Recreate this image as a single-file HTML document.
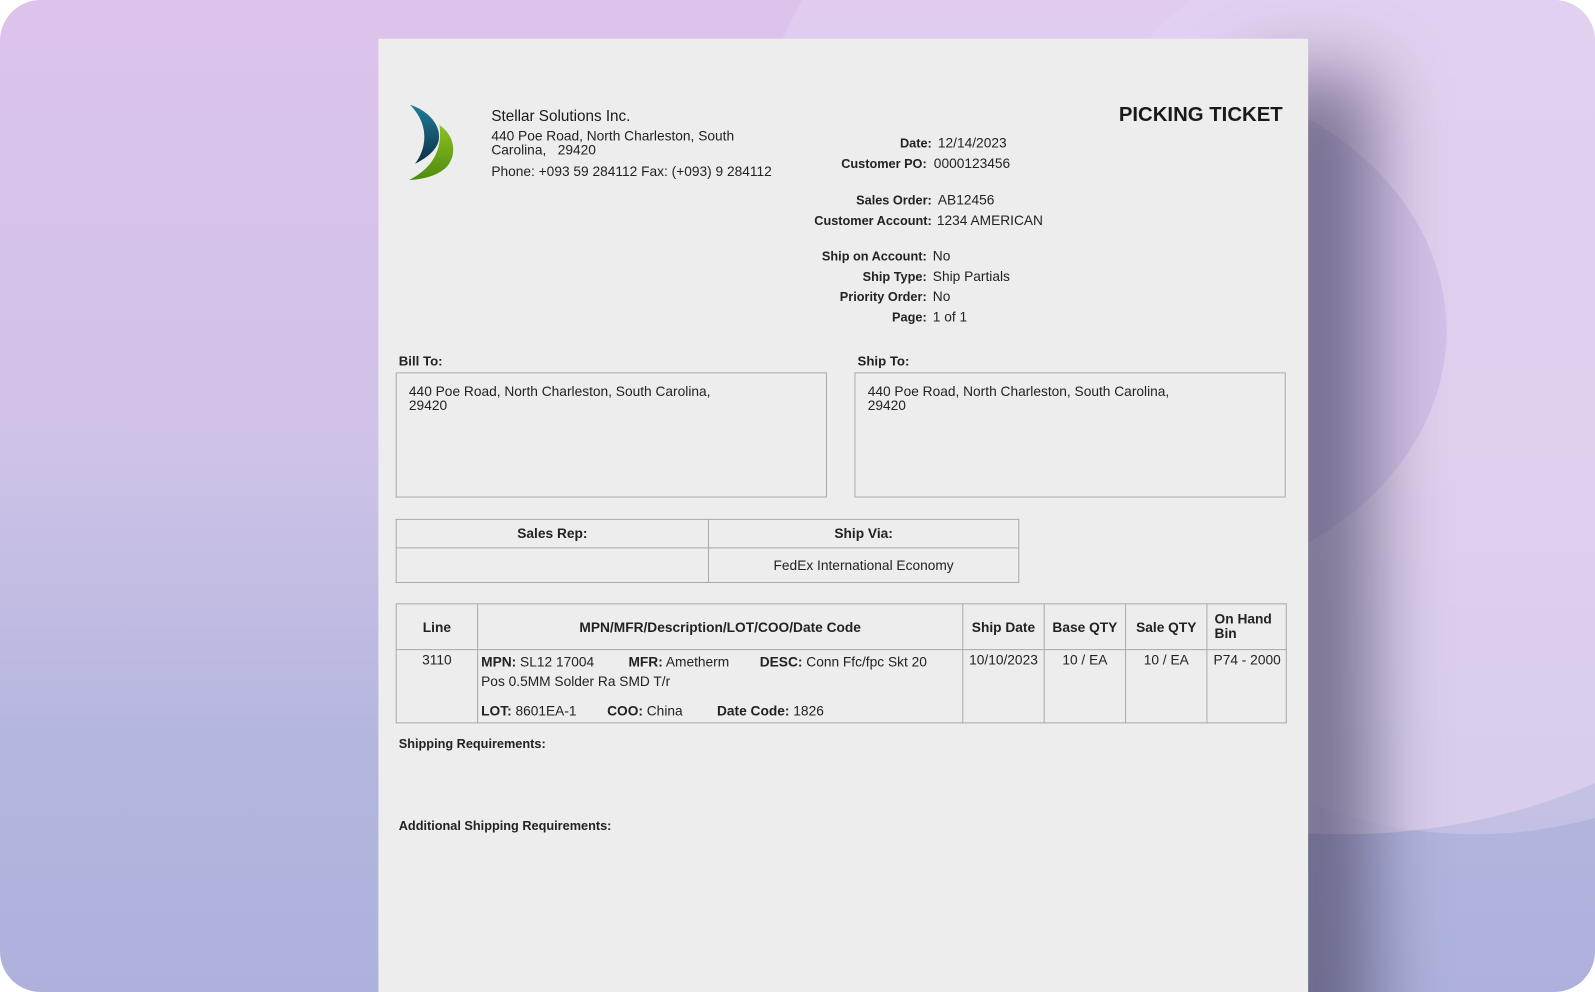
<!DOCTYPE html>
<html><head><meta charset="utf-8"><style>
html,body{margin:0;padding:0;width:1595px;height:992px;overflow:hidden;background:#fff;}
#w{position:absolute;left:0;top:0;width:1568px;height:975px;overflow:hidden;transform:scale(1.01722,1.01744);transform-origin:0 0;font-family:"Liberation Sans",sans-serif;color:#222;}
.bg{position:absolute;inset:0;border-radius:40px;overflow:hidden;background:linear-gradient(180deg,#dcc3ec 0%,#cfc2e8 45%,#b4b6de 75%,#adb1dc 100%);}
.doc{position:absolute;left:372px;top:38px;width:914px;height:937px;background:#ededed;}
.a{position:absolute;white-space:nowrap;}
.lb{font-weight:bold;font-size:12.5px;text-align:right;width:200px;}
.v{font-size:13.5px;}
.box{position:absolute;border:1px solid #aaa;}
table{border-collapse:collapse;position:absolute;font-size:13.5px;}
td,th{border:1px solid #aaa;padding:0;}
th{font-size:13.5px;}
</style></head><body><div id="w">
<div class="bg">
 <div style="position:absolute;left:720px;top:-300px;width:1200px;height:1120px;border-radius:50%;background:#e2d0f0;opacity:.7"></div>
 <div style="position:absolute;left:780px;top:70px;width:642px;height:510px;border-radius:50%;background:#c8b5e3;"></div>
 <div style="position:absolute;left:1000px;top:-100px;width:900px;height:920px;border-radius:50%;background:rgba(225,215,240,.35)"></div>
 <div style="position:absolute;left:1230px;top:75px;width:120px;height:1000px;background:rgba(60,55,85,.6);filter:blur(35px);"></div>
</div>
<div class="doc"></div>
<svg class="a" style="left:0;top:0" width="1568" height="975">
 <defs><linearGradient id="gb" x1="0" y1="0" x2="0" y2="1"><stop offset="0" stop-color="#1f7f9a"/><stop offset="1" stop-color="#0c2f44"/></linearGradient>
 <linearGradient id="gg" x1="0" y1="0" x2="0" y2="1"><stop offset="0" stop-color="#8dc21f"/><stop offset="1" stop-color="#4e8a10"/></linearGradient></defs>
 <path d="M403 103 C425 110 436 128 430 142 C426 150 418 156 408 161 C420 145 422 122 403 103Z" fill="url(#gb)"/>
 <path d="M432 123 C446 132 450 150 440 163 C432 172 418 176 402 177 C420 168 436 152 432 123Z" fill="url(#gg)"/>
</svg>
<div class="a" style="left:483px;top:106px;font-size:15px;color:#1a1a1a">Stellar Solutions Inc.</div>
<div class="a v" style="left:483px;top:127px;line-height:14px">440 Poe Road, North Charleston, South<br>Carolina,&nbsp;&nbsp; 29420</div>
<div class="a v" style="left:483px;top:161px">Phone: +093 59 284112 Fax: (+093) 9 284112</div>
<div class="a" style="right:307px;top:102px;font-size:20px;font-weight:bold;color:#1a1a1a">PICKING TICKET</div>
<div class="a lb" style="left:716px;top:134px">Date:</div><div class="a v" style="left:922px;top:133px">12/14/2023</div>
<div class="a lb" style="left:711px;top:154px">Customer PO:</div><div class="a v" style="left:918px;top:153px">0000123456</div>
<div class="a lb" style="left:716px;top:190px">Sales Order:</div><div class="a v" style="left:922px;top:189px">AB12456</div>
<div class="a lb" style="left:716px;top:210px">Customer Account:</div><div class="a v" style="left:921px;top:209px">1234 AMERICAN</div>
<div class="a lb" style="left:711px;top:245px">Ship on Account:</div><div class="a v" style="left:917px;top:244px">No</div>
<div class="a lb" style="left:711px;top:265px">Ship Type:</div><div class="a v" style="left:917px;top:264px">Ship Partials</div>
<div class="a lb" style="left:711px;top:285px">Priority Order:</div><div class="a v" style="left:917px;top:284px">No</div>
<div class="a lb" style="left:711px;top:305px">Page:</div><div class="a v" style="left:917px;top:304px">1 of 1</div>
<div class="a" style="left:392px;top:347px;font-size:13px;font-weight:bold">Bill To:</div>
<div class="a" style="left:843px;top:347px;font-size:13px;font-weight:bold">Ship To:</div>
<div class="box" style="left:389px;top:366px;width:422px;height:121px"></div>
<div class="box" style="left:840px;top:366px;width:422px;height:121px"></div>
<div class="a v" style="left:402px;top:378px;line-height:14px">440 Poe Road, North Charleston, South Carolina,<br>29420</div>
<div class="a v" style="left:853px;top:378px;line-height:14px">440 Poe Road, North Charleston, South Carolina,<br>29420</div>
<table style="left:389px;top:510px;width:613px">
<tr style="height:28px"><th style="width:306px">Sales Rep:</th><th>Ship Via:</th></tr>
<tr style="height:34px"><td></td><td style="text-align:center">FedEx International Economy</td></tr>
</table>
<table style="left:389px;top:593px;width:876px">
<tr style="height:45px"><th style="width:79px">Line</th><th style="width:476px">MPN/MFR/Description/LOT/COO/Date Code</th><th style="width:79px">Ship Date</th><th style="width:79px">Base QTY</th><th style="width:79px">Sale QTY</th><th style="text-align:left;padding-left:7px;line-height:14px">On Hand<br>Bin</th></tr>
<tr style="height:71px;vertical-align:top"><td style="text-align:center;padding-top:2px">3110</td>
<td style="padding:2px 3px;line-height:19px;position:relative"><b>MPN:</b> SL12 17004 &nbsp;&nbsp;&nbsp;&nbsp;&nbsp;&nbsp;&nbsp;&nbsp;<b>MFR:</b> Ametherm &nbsp;&nbsp;&nbsp;&nbsp;&nbsp;&nbsp;&nbsp;<b>DESC:</b> Conn Ffc/fpc Skt 20<br>Pos 0.5MM Solder Ra SMD T/r<div style="margin-top:10px"><b>LOT:</b> 8601EA-1 &nbsp;&nbsp;&nbsp;&nbsp;&nbsp;&nbsp;&nbsp;<b>COO:</b> China &nbsp;&nbsp;&nbsp;&nbsp;&nbsp;&nbsp;&nbsp;&nbsp;<b>Date Code:</b> 1826</div></td>
<td style="text-align:center;padding-top:2px">10/10/2023</td><td style="text-align:center;padding-top:2px">10 / EA</td><td style="text-align:center;padding-top:2px">10 / EA</td><td style="padding:2px 0 0 6px">P74 - 2000</td></tr>
</table>
<div class="a" style="left:392px;top:724px;font-size:12.5px;font-weight:bold">Shipping Requirements:</div>
<div class="a" style="left:392px;top:805px;font-size:12.5px;font-weight:bold">Additional Shipping Requirements:</div>
</div></body></html>
